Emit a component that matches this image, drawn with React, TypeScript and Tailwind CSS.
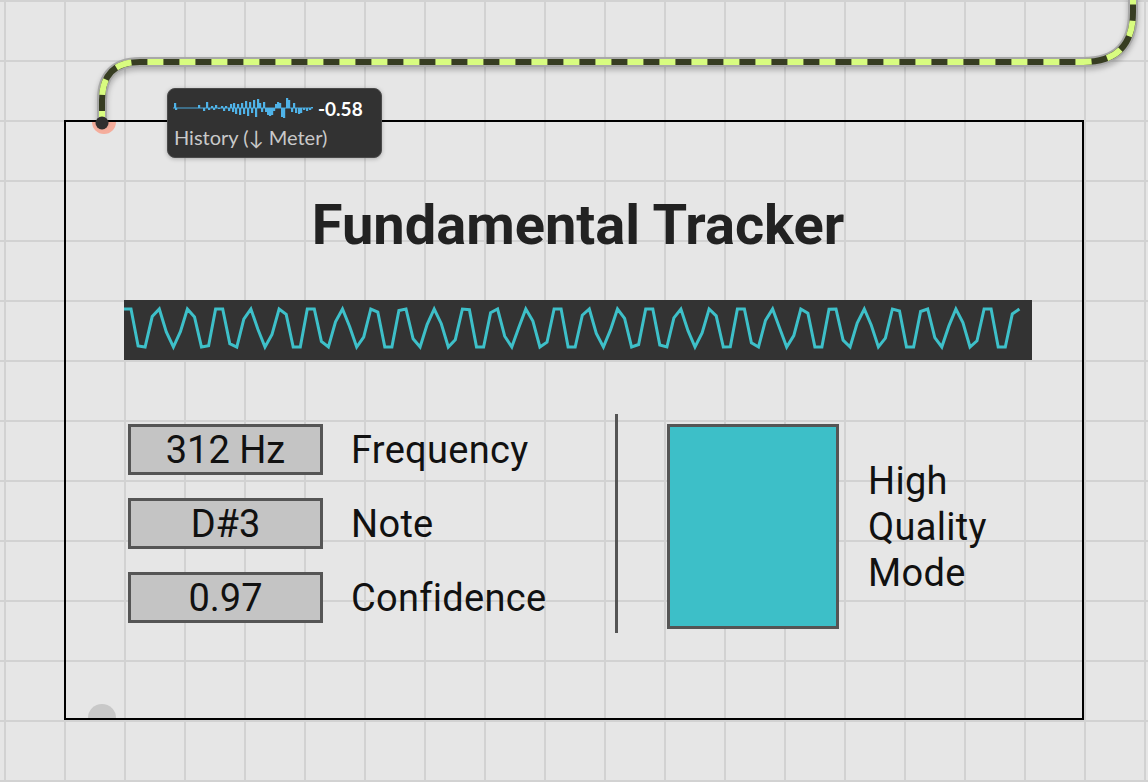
import React from "react";

// sampled sine, drawn the way the scope object renders it (few points per cycle)
const WAVE_STEP = 7.05;
const WAVE_PERIOD = 30.7;

const wavePoints = (() => {
  const pts: string[] = [];
  for (let i = 0; i * WAVE_STEP <= 898; i++) {
    const x = i * WAVE_STEP;
    const raw = 28 - 30 * Math.sin((x / WAVE_PERIOD) * Math.PI * 2 + 0.9);
    const y = Math.min(47, Math.max(9, raw));
    pts.push(`${x.toFixed(1)},${y.toFixed(1)}`);
  }
  return pts.join(" ");
})();

// history meter ticks: [x, height]  (positive = up, negative = down)
const ticks: [number, number][] = [
  [1, 5], [2, -2], [25, 3], [30, -3], [33, 6], [35, -2],
  [38, 2], [40, -2], [42, 3], [45, -1], [48, 2], [50, -3], [52, 2], [55, -3], [57, 4], [59, -4],
  [60, 5], [62, -6], [64, 4], [66, -7], [68, 5], [70, -6], [72, 7], [74, -8], [76, 6], [78, -5], [80, 8], [82, -9],
  [84, 9], [86, 5], [88, -4], [90, 6],
  [92, -4], [94, -7], [96, -8], [98, -7], [100, -3],
  [102, 4], [104, 6], [106, 5],
  [108, -9], [110, -10],
  [113, 10], [115, 8],
  [118, -4], [120, 5], [122, -5],
  [125, -6], [127, -5],
  [130, -2], [133, -3], [136, -2], [138, 1],
];

const CABLE = "M102 123 V100 Q102 62 140 62 H1083 Q1133 62 1133 12 V-4";

const readouts = [
  { value: "312 Hz", label: "Frequency" },
  { value: "D#3", label: "Note" },
  { value: "0.97", label: "Confidence" },
];

function Cable() {
  return (
    <svg className="absolute left-0 top-0 pointer-events-none" width={1148} height={782}>
      <defs>
        <filter id="cableShadow" x="-10%" y="-10%" width="120%" height="140%">
          <feGaussianBlur stdDeviation="2.5" />
        </filter>
      </defs>
      <path d={CABLE} transform="translate(0 3)" fill="none" stroke="rgba(0,0,0,0.22)" strokeWidth={11} filter="url(#cableShadow)" />
      <path d={CABLE} fill="none" stroke="#a8a8a8" strokeWidth={10} strokeLinecap="round" />
      <path d={CABLE} fill="none" stroke="#373d22" strokeWidth={6} />
      <path d={CABLE} fill="none" stroke="#d8fc80" strokeWidth={6} strokeDasharray="16 16" strokeDashoffset={4} />
      <circle cx={102} cy={123} r={6.5} fill="#2f2f2f" />
    </svg>
  );
}

function HistoryTooltip() {
  return (
    <div className="absolute left-[167px] top-[88px] w-[215px] h-[70px] rounded-lg bg-[#323232] border border-[#4a4a4a] shadow-[0_1px_4px_rgba(0,0,0,0.25)] font-['Lato',sans-serif] px-[5px] pt-[7px]">
      <div className="flex items-center">
        <svg width={140} height={24} className="shrink-0">
          <rect x={0} y={11.5} width={140} height={1} fill="#4aa9de" />
          {ticks.map(([x, h], i) => (
            <rect key={i} x={x} y={h > 0 ? 12 - h : 12} width={2.2} height={Math.abs(h)} fill="#4fb3e8" />
          ))}
        </svg>
        <span className="ml-[5px] text-[19px] leading-none font-bold text-white">-0.58</span>
      </div>
      <div className="mt-[6px] ml-[1px] text-[20px] leading-[22px] text-[#c9c9c9]">History (↓ Meter)</div>
    </div>
  );
}

function NumberBox({ value }: { value: string }) {
  return (
    <div className="w-[195px] h-[51px] border-[3px] border-[#555555] bg-[#c4c4c4] flex items-center justify-center text-[38px] leading-none text-[#111111]">
      {value}
    </div>
  );
}

export default function App() {
  return (
    <div className="relative w-[1148px] h-[782px] overflow-hidden bg-[#e6e6e6] [background-image:linear-gradient(to_right,#d2d2d2_2px,transparent_2px),linear-gradient(to_bottom,#d2d2d2_2px,transparent_2px)] [background-size:60px_60px] [background-position:4px_0px] font-['Roboto',sans-serif]">
      <div className="pl-[64px] pt-[120px]">
        {/* device panel */}
        <div className="relative w-[1020px] h-[600px] border-2 border-black pl-[58px]">
          <div className="w-[908px]">
            <h1 className="mt-[75px] text-center text-[56px] leading-none font-bold text-[#222222]">
              Fundamental Tracker
            </h1>

            <div className="mt-[47px] h-[60px] bg-[#333333]">
              <svg width={908} height={60}>
                <polyline points={wavePoints} fill="none" stroke="#3ec0c9" strokeWidth={3} />
              </svg>
            </div>

            <div className="mt-[54px] flex items-start">
              <div className="w-[491px] pl-[4px] mt-[10px] flex flex-col gap-[23px]">
                {readouts.map((r) => (
                  <div key={r.label} className="flex items-center">
                    <NumberBox value={r.value} />
                    <span className="ml-[28px] text-[38px] leading-none tracking-[0.3px] text-[#111111]">{r.label}</span>
                  </div>
                ))}
              </div>

              <div className="w-[3px] h-[219px] bg-[#555555]" />

              <div className="ml-[49px] mt-[10px] flex items-center">
                <div className="w-[172px] h-[205px] border-[3px] border-[#555555] bg-[#3dbfc8]" />
                <div className="ml-[29px] text-[38px] leading-[46px] tracking-[0.3px] text-[#111111]">
                  High
                  <br />
                  Quality
                  <br />
                  Mode
                </div>
              </div>
            </div>
          </div>

          {/* inlet / outlet */}
          <div className="absolute left-[26px] top-0 w-[24px] h-[12px] rounded-b-full bg-[#f5ad9c]" />
          <div className="absolute left-[22px] bottom-0 w-[28px] h-[14px] rounded-t-full bg-[#c8c8c8]" />
        </div>
      </div>

      <Cable />
      <HistoryTooltip />
    </div>
  );
}
